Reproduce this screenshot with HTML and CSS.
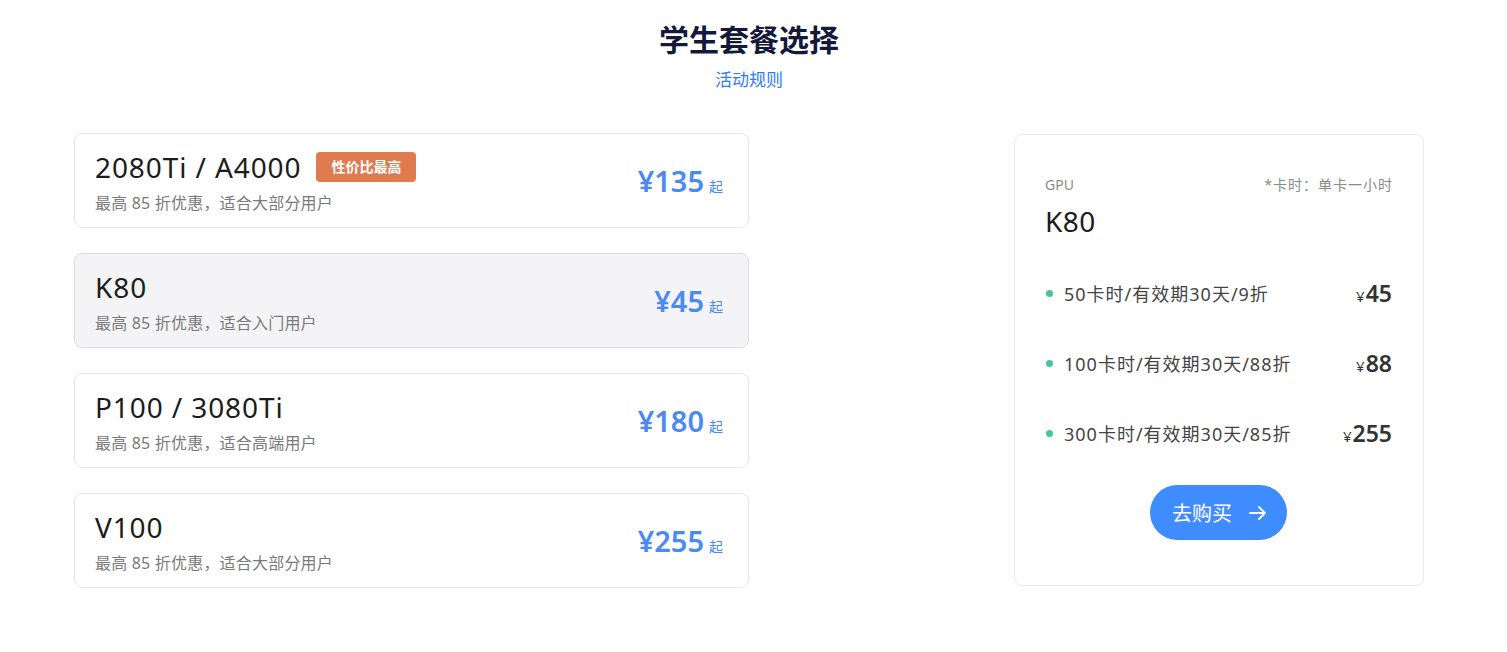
FILE: index.html
```html
<!DOCTYPE html>
<html lang="zh-CN">
<head>
<meta charset="utf-8">
<title>学生套餐选择</title>
<link rel="stylesheet" href="styles.css">
</head>
<body>
<div class="page">
  <header class="head">
    <h1 class="title">学生套餐选择</h1>
    <a class="rules" href="#">活动规则</a>
  </header>
  <main class="main">
    <section class="plans">
      <div class="plan">
        <div class="plan-info">
          <div class="plan-name"><span class="name-text">2080Ti / A4000</span><span class="badge">性价比最高</span></div>
          <div class="plan-desc">最高 85 折优惠，适合大部分用户</div>
        </div>
        <div class="plan-price"><span class="amt">¥135</span><span class="from">起</span></div>
      </div>
      <div class="plan active">
        <div class="plan-info">
          <div class="plan-name"><span class="name-text">K80</span></div>
          <div class="plan-desc">最高 85 折优惠，适合入门用户</div>
        </div>
        <div class="plan-price"><span class="amt">¥45</span><span class="from">起</span></div>
      </div>
      <div class="plan">
        <div class="plan-info">
          <div class="plan-name"><span class="name-text">P100 / 3080Ti</span></div>
          <div class="plan-desc">最高 85 折优惠，适合高端用户</div>
        </div>
        <div class="plan-price"><span class="amt">¥180</span><span class="from">起</span></div>
      </div>
      <div class="plan">
        <div class="plan-info">
          <div class="plan-name"><span class="name-text">V100</span></div>
          <div class="plan-desc">最高 85 折优惠，适合大部分用户</div>
        </div>
        <div class="plan-price"><span class="amt">¥255</span><span class="from">起</span></div>
      </div>
    </section>
    <aside class="detail">
      <div class="detail-top">
        <span class="label">GPU</span>
        <span class="note">*卡时：单卡一小时</span>
      </div>
      <div class="detail-name">K80</div>
      <ul class="options">
        <li class="option"><span class="dot"></span><span class="opt-text">50卡时/有效期30天/9折</span><span class="opt-price"><small>¥</small>45</span></li>
        <li class="option"><span class="dot"></span><span class="opt-text">100卡时/有效期30天/88折</span><span class="opt-price"><small>¥</small>88</span></li>
        <li class="option"><span class="dot"></span><span class="opt-text">300卡时/有效期30天/85折</span><span class="opt-price"><small>¥</small>255</span></li>
      </ul>
      <div class="buy-wrap">
        <button class="buy">去购买
          <svg width="18" height="16" viewBox="0 0 18 16" fill="none" stroke="#fff" stroke-width="1.8" stroke-linecap="round" stroke-linejoin="round"><path d="M1 8h15M10 2l6 6-6 6"/></svg>
        </button>
      </div>
    </aside>
  </main>
</div>
</body>
</html>
```
FILE: styles.css
```css
* { box-sizing: border-box; }
body {
  margin: 0;
  background: #fff;
  font-family: "Noto Sans", "Noto Sans CJK SC", sans-serif;
  color: #1f1f1f;
}
.page { padding: 20px 83px 0 74px; }
.head {
  display: flex;
  flex-direction: column;
  align-items: center;
}
.title {
  margin: 0;
  font-size: 30px;
  font-weight: 700;
  color: #14193a;
  line-height: 40px;
}
.rules {
  margin-top: 8px;
  font-size: 17px;
  color: #2f7bff;
  text-decoration: none;
  line-height: 24px;
}
.main {
  display: flex;
  justify-content: space-between;
  align-items: flex-start;
  margin-top: 41px;
}
.plans {
  width: 675px;
  display: flex;
  flex-direction: column;
  gap: 25px;
}
.plan {
  height: 95px;
  border: 1px solid #e6e6e8;
  border-radius: 8px;
  background: #fff;
  display: flex;
  align-items: center;
  justify-content: space-between;
  padding: 0 25px 0 20px;
}
.plan.active {
  background: #f4f4f6;
  border-color: #dcdce0;
}
.plan-name {
  font-size: 28px;
  line-height: 38px;
  color: #1c1c1c;
  display: flex;
  align-items: center;
  gap: 15px;
}
.name-text {
  letter-spacing: 0.9px;
  white-space: pre;
}
.badge {
  background: #e07b50;
  color: #fff;
  font-size: 14px;
  font-weight: 700;
  border-radius: 4px;
  padding: 0 15px;
  height: 30px;
  line-height: 30px;
}
.plan-desc {
  font-size: 16px;
  color: #7a7a7a;
  margin-top: 6px;
  line-height: 22px;
  letter-spacing: 0.2px;
}
.plan-price {
  display: flex;
  align-items: baseline;
  color: #4a8af4;
}
.amt {
  font-size: 29px;
  font-weight: 600;
}
.from {
  font-size: 14px;
  margin-left: 5px;
}
.detail {
  width: 410px;
  height: 452px;
  margin-top: 1px;
  border: 1px solid #ebebed;
  border-radius: 8px;
  padding: 41px 31px 0 30px;
}
.detail-top {
  display: flex;
  justify-content: space-between;
  font-size: 14px;
  color: #8a8a8a;
  line-height: 18px;
}
.note { letter-spacing: 1px; margin-right: -1px; }
.detail-name {
  font-size: 28px;
  line-height: 38px;
  color: #1c1c1c;
  margin-top: 8px;
  letter-spacing: 0.5px;
}
.options {
  list-style: none;
  margin: 38px 0 0 0;
  padding: 0;
  display: flex;
  flex-direction: column;
  gap: 40px;
}
.option {
  display: flex;
  align-items: center;
  height: 30px;
}
.dot {
  width: 7px;
  height: 7px;
  border-radius: 50%;
  background: #45c79b;
  margin: 0 11px 0 1px;
}
.opt-text {
  flex: 1;
  font-size: 18px;
  letter-spacing: 1px;
  color: #444;
}
.opt-price {
  font-size: 23px;
  font-weight: 600;
  color: #333;
}
.opt-price small {
  font-size: 15px;
  font-weight: 400;
  margin-right: 1px;
}
.buy-wrap {
  display: flex;
  justify-content: center;
  margin-top: 37px;
}
.buy {
  width: 137px;
  height: 55px;
  border: none;
  border-radius: 28px;
  background: #3f8cff;
  color: #fff;
  font-family: inherit;
  font-size: 20px;
  display: flex;
  align-items: center;
  justify-content: center;
  gap: 17px;
  padding: 0 0 0 2px;
}
```
